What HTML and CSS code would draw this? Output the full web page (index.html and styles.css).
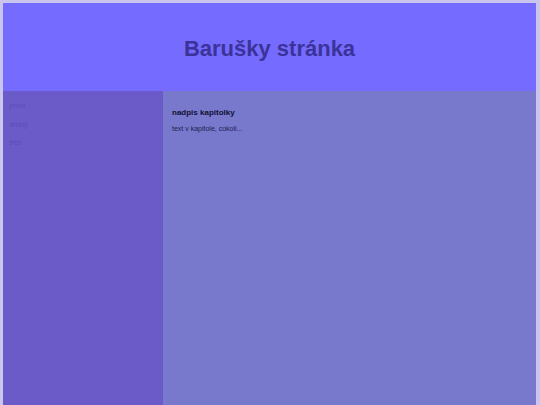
FILE: index.html
```html
<!DOCTYPE html>
<html lang="cs">
<head>
<meta charset="utf-8">
<title>Barušky stránka</title>
<link rel="stylesheet" href="styles.css">
</head>
<body>
<div class="page">
  <header class="header">
    <h1 class="title">Barušky stránka</h1>
  </header>
  <div class="main">
    <nav class="sidebar">
      <ul class="menu">
        <li class="menu-item">prvni</li>
        <li class="menu-item">druhý</li>
        <li class="menu-item">třetí</li>
      </ul>
    </nav>
    <section class="content">
      <h2 class="chapter-title">nadpis kapitolky</h2>
      <p class="chapter-text">text v kapitole, cokoli...</p>
    </section>
  </div>
</div>
</body>
</html>
```

FILE: styles.css
```css
html, body {
  margin: 0;
  padding: 0;
  height: 100%;
}
body {
  background: #c9c5ee;
  font-family: "Liberation Sans", Arial, sans-serif;
}
.page {
  margin: 3px 4px 0 3px;
  height: calc(100% - 3px);
  display: flex;
  flex-direction: column;
}
.header {
  height: 88px;
  background: #756bff;
  display: flex;
  align-items: center;
  justify-content: center;
}
.title {
  margin: 0;
  font-size: 22px;
  font-weight: bold;
  color: #3b3399;
  line-height: 26px;
  padding-top: 4px;
}
.main {
  flex: 1;
  display: flex;
}
.sidebar {
  width: 160px;
  background: #6b5bc9;
}
.menu {
  list-style: none;
  margin: 0;
  padding: 6px 0 0 6px;
}
.menu-item {
  font-size: 7.5px;
  line-height: 18.5px;
  color: #5a4cb8;
}
.content {
  flex: 1;
  background: #7878cc;
  padding: 16px 9px 0 9px;
}
.chapter-title {
  margin: 0 0 4px 0;
  font-size: 8px;
  line-height: 12px;
  font-weight: bold;
  color: #111133;
}
.chapter-text {
  margin: 0;
  font-size: 7px;
  line-height: 12px;
  color: #222255;
}
```
